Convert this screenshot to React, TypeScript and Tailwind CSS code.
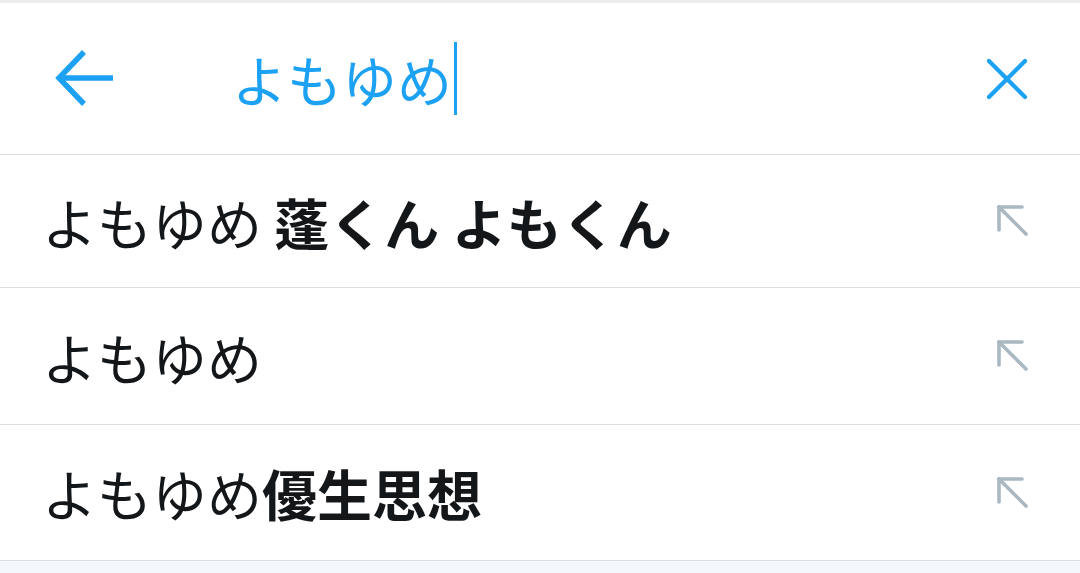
import React from "react";

const font = { fontFamily: '"Noto Sans CJK JP", "Noto Sans", sans-serif' };

function RowArrow() {
  return (
    <svg width="34" height="34" viewBox="0 0 34 34" fill="none" stroke="#aab8c2" strokeWidth="3.6" strokeLinecap="round" strokeLinejoin="round">
      <path d="M3 3 L26 3" />
      <path d="M3 3 L3 26" />
      <path d="M3 3 L30 30" />
    </svg>
  );
}

function Row({ regular, bold, h }: { regular: string; bold?: string; h: string }) {
  return (
    <div className={`flex items-center justify-between border-b border-[#dcdfe1] pl-[42px] pr-[50px] ${h}`}>
      <div className="text-[55px] leading-none text-[#14171a] whitespace-pre font-normal" style={font}>
        <span>{regular}</span>
        {bold ? <span className="font-bold">{bold}</span> : null}
      </div>
      <RowArrow />
    </div>
  );
}

export default function App() {
  return (
    <div className="w-[1080px] h-[573px] bg-[#f5f8fa] overflow-hidden" style={font}>
      <div className="h-[3px] bg-[#ececec]" />
      <div className="bg-white">
        <div className="h-[152px] flex items-center border-b border-[#dcdfe1]">
          <div className="pl-[55px] w-[232px] shrink-0">
            <svg width="60" height="60" viewBox="0 0 60 60" fill="none" stroke="#1da1f2" strokeWidth="5.5" strokeLinecap="butt" strokeLinejoin="miter">
              <path d="M4 29 L58 29" />
              <path d="M29 3 L4 29 L29 55" />
            </svg>
          </div>
          <div className="flex items-center flex-1">
            <span className="text-[55px] leading-none text-[#1da1f2] font-normal" style={font}>よもゆめ</span>
            <span className="ml-[2px] w-[3px] h-[73px] bg-[#1da1f2]" />
          </div>
          <div className="pr-[52px]">
            <svg width="42" height="42" viewBox="0 0 42 42" fill="none" stroke="#1da1f2" strokeWidth="4.2" strokeLinecap="round">
              <path d="M3 3 L39 39" />
              <path d="M39 3 L3 39" />
            </svg>
          </div>
        </div>
        <Row regular="よもゆめ " bold="蓬くん よもくん" h="h-[133px]" />
        <Row regular="よもゆめ" h="h-[137px]" />
        <Row regular="よもゆめ" bold="優生思想" h="h-[136px]" />
      </div>
    </div>
  );
}
